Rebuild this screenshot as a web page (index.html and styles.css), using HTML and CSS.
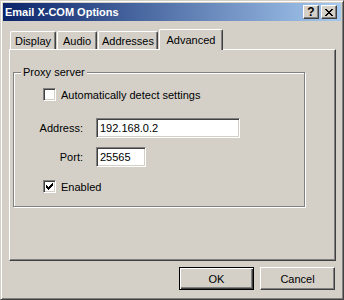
FILE: index.html
```html
<!DOCTYPE html>
<html>
<head>
  <meta charset="utf-8">
  <link rel="stylesheet" href="styles.css">
</head>
<body>
  <div class="window">
    <div class="titlebar">
      <span class="title">Email X-COM Options</span>
      <div class="caption-btns">
        <button class="cap-btn help">?</button>
        <button class="cap-btn close">
          <svg width="8" height="7" viewBox="0 0 8 7" shape-rendering="crispEdges">
            <path d="M0 0h2v1h-2zM6 0h2v1h-2zM1 1h2v1h-2zM5 1h2v1h-2zM2 2h4v1h-4zM3 3h2v1h-2zM2 4h4v1h-4zM1 5h2v1h-2zM5 5h2v1h-2zM0 6h2v1h-2zM6 6h2v1h-2z" fill="#000"/>
          </svg>
        </button>
      </div>
    </div>

    <div class="content">
      <div class="tabs">
        <div class="tab tab-display">Display</div>
        <div class="tab tab-audio">Audio</div>
        <div class="tab tab-addresses">Addresses</div>
        <div class="tab tab-advanced active">Advanced</div>
      </div>

      <div class="panel">
        <fieldset class="group">
          <legend>Proxy server</legend>
          <div class="group-body">
            <label class="check check-auto">
              <span class="box"></span>
              <span>Automatically detect settings</span>
            </label>

            <div class="fields">
              <span class="lbl">Address:</span>
              <span class="edit edit-wide">192.168.0.2</span>
              <span class="lbl">Port:</span>
              <span class="edit edit-short">25565</span>
            </div>

            <label class="check check-enabled">
              <span class="box">
                <!-- classic 7x7 check mark -->
                <svg width="7" height="7" viewBox="0 0 7 7" shape-rendering="crispEdges">
                  <path d="M0 2h1v3h-1zM1 3h1v3h-1zM2 4h1v3h-1zM3 3h1v3h-1zM4 2h1v3h-1zM5 1h1v3h-1zM6 0h1v3h-1z" fill="#000"/>
                </svg>
              </span>
              <span>Enabled</span>
            </label>
          </div>
        </fieldset>
      </div>

      <div class="actions">
        <button class="btn btn-default">OK</button>
        <button class="btn">Cancel</button>
      </div>
    </div>
  </div>
</body>
</html>
```

FILE: styles.css
```css
* {
  margin: 0;
  padding: 0;
  box-sizing: border-box;
}

body {
  background: #d4d0c8;
  font-family: 'Liberation Sans', Arial, sans-serif;
  font-size: 11px;
  color: #000;
}

.window {
  width: 344px;
  height: 300px;
  background: #d4d0c8;
  border: 1px solid;
  border-color: #d4d0c8 #404040 #404040 #d4d0c8;
  box-shadow: inset 1px 1px #fff, inset -1px -1px #808080;
  padding: 2px;
  display: flex;
  flex-direction: column;
}

/* Title bar */
.titlebar {
  height: 18px;
  background: linear-gradient(to right, #0a246a, #a6caf0);
  display: flex;
  align-items: center;
  padding: 0 4px 0 2px;
  flex-shrink: 0;
}

.title {
  color: #fff;
  font-weight: bold;
  font-size: 11px;
  white-space: nowrap;
}

.caption-btns {
  margin-left: auto;
  display: flex;
  gap: 2px;
}

.cap-btn {
  width: 16px;
  height: 14px;
  background: #d4d0c8;
  border: 1px solid;
  border-color: #fff #404040 #404040 #fff;
  box-shadow: inset -1px -1px #808080;
  display: flex;
  align-items: center;
  justify-content: center;
  font-family: inherit;
  font-weight: bold;
  font-size: 12px;
  line-height: 12px;
  color: #000;
}

.cap-btn svg {
  display: block;
}

/* Main content */
.content {
  flex: 1;
  display: flex;
  flex-direction: column;
  padding: 8px 5px 0 6px;
}

.tabs {
  display: flex;
  align-items: flex-end;
  height: 20px;
  padding-left: 1px;
  gap: 1px;
}

.tab {
  height: 18px;
  border-left: 1px solid #fff;
  border-top: 1px solid #fff;
  border-right: 1px solid #404040;
  box-shadow: inset -1px 0 #808080;
  border-top-left-radius: 2px;
  border-top-right-radius: 2px;
  display: flex;
  align-items: center;
  justify-content: center;
  padding-top: 1px;
  background: #d4d0c8;
}

.tab-display { width: 46px; }
.tab-audio { width: 40px; }
.tab-addresses { width: 60px; }
.tab-advanced { width: 64px; }

.tab.active {
  height: 21px;
  margin-bottom: -1px;
  padding-bottom: 2px;
  position: relative;
  z-index: 1;
}

.panel {
  height: 212px;
  border: 1px solid;
  border-color: #fff #404040 #404040 #fff;
  box-shadow: inset -1px -1px #808080;
  padding: 16px 3px 0 3px;
}

/* Group box */
.group {
  width: 292px;
  border: 1px solid #808080;
  box-shadow: inset 1px 1px #fff, 1px 1px #fff;
  padding: 0 8px 13px 7px;
}

.group legend {
  padding: 0 2px;
  line-height: 13px;
  background: #d4d0c8;
}

.group-body {
  padding-left: 22px;
}

.check {
  display: flex;
  align-items: center;
  height: 13px;
  gap: 5px;
}

.check-auto {
  margin-top: 9px;
}

.check-enabled {
  margin-top: 13px;
}

.box {
  width: 13px;
  height: 13px;
  background: #fff;
  border: 1px solid;
  border-color: #808080 #fff #fff #808080;
  box-shadow: inset 1px 1px #404040, inset -1px -1px #d4d0c8;
  display: flex;
  align-items: center;
  justify-content: center;
}

.box svg {
  display: block;
}

.fields {
  display: grid;
  grid-template-columns: 40px auto;
  column-gap: 13px;
  row-gap: 9px;
  align-items: center;
  justify-items: start;
  margin-top: 17px;
}

.lbl {
  justify-self: end;
}

.edit {
  height: 20px;
  background: #fff;
  border: 1px solid;
  border-color: #808080 #fff #fff #808080;
  box-shadow: inset 1px 1px #404040, inset -1px -1px #d4d0c8;
  padding-left: 3px;
  line-height: 18px;
}

.edit-wide { width: 144px; }
.edit-short { width: 50px; }

/* Dialog buttons */
.actions {
  display: flex;
  justify-content: flex-end;
  gap: 6px;
  margin-top: 6px;
  padding-right: 1px;
}

.btn {
  width: 75px;
  height: 23px;
  background: #d4d0c8;
  border: 1px solid;
  border-color: #fff #404040 #404040 #fff;
  box-shadow: inset -1px -1px #808080;
  font-family: inherit;
  font-size: 11px;
  color: #000;
}

.btn-default {
  border-color: #000;
  box-shadow: inset 1px 1px #fff, inset -1px -1px #404040, inset -2px -2px #808080;
}
```
